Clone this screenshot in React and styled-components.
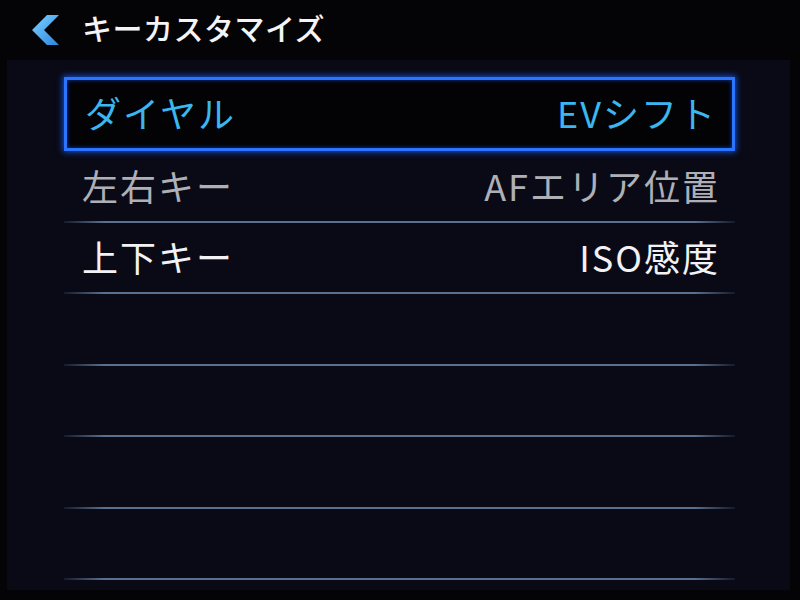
import React from 'react';
import styled, { createGlobalStyle } from 'styled-components';

const GlobalStyle = createGlobalStyle`
  html, body {
    margin: 0;
    padding: 0;
    background: #040407;
  }
  body {
    font-family: "Noto Sans CJK JP", "Noto Sans", "Liberation Sans", sans-serif;
  }
`;

const Screen = styled.div`
  width: 800px;
  height: 600px;
  display: flex;
  flex-direction: column;
  background: #040407;
  overflow: hidden;
`;

const Header = styled.div`
  height: 60px;
  display: flex;
  align-items: center;
  padding-left: 30px;
  gap: 20px;
  box-sizing: border-box;
`;

const Title = styled.h1`
  margin: 0;
  font-size: 30px;
  font-weight: 500;
  color: #f4f4f6;
  letter-spacing: 0.5px;
  line-height: 1;
  padding-bottom: 6px;
`;

const Panel = styled.div`
  flex: 1;
  margin: 0 10px 10px 7px;
  background: #0a0a16;
  padding: 17px 55px 0 57px;
  box-sizing: border-box;
`;

const List = styled.div`
  display: flex;
  flex-direction: column;
`;

const Row = styled.div`
  position: relative;
  height: ${p => (p.$selected ? '74px' : '71.5px')};
  box-sizing: border-box;
  display: flex;
  align-items: center;
  justify-content: space-between;
  padding: 0 15px 0 18px;
  font-size: 36px;
  font-weight: 400;
  letter-spacing: 2px;
  line-height: 1;
  color: ${p => (p.$selected ? '#3bb6ef' : p.$dim ? '#aeb0b6' : '#f2f2f4')};
  border: ${p => (p.$selected ? '3px solid #2a74ff' : 'none')};
  box-shadow: ${p => (p.$selected ? '0 0 6px 1px #1450d8, inset 0 0 4px #0b3aa8' : 'none')};
  background: ${p => (p.$selected ? '#030306' : 'transparent')};

  &::after {
    content: '';
    display: ${p => (p.$line ? 'block' : 'none')};
    position: absolute;
    left: 0;
    right: 0;
    bottom: 0;
    height: 2px;
    background: linear-gradient(
      90deg,
      rgba(70, 95, 130, 0.2) 0%,
      #5a7090 6%,
      #5a7090 94%,
      rgba(70, 95, 130, 0.2) 100%
    );
  }
`;

const Label = styled.span`
  padding-bottom: 4px;
`;

const Value = styled.span`
  padding-bottom: 4px;
`;

const BackIcon = () => (
  <svg width="32" height="32" viewBox="0 0 32 32">
    <defs>
      <linearGradient id="chev" x1="0" y1="0" x2="1" y2="1">
        <stop offset="0" stopColor="#7fd2ff" />
        <stop offset="1" stopColor="#2a86e0" />
      </linearGradient>
    </defs>
    <polygon points="17,1 29,1 14,16 29,31 17,31 2,16" fill="url(#chev)" />
  </svg>
);

const rows = [
  { label: 'ダイヤル', value: 'EVシフト', selected: true },
  { label: '左右キー', value: 'AFエリア位置', dim: true, line: true },
  { label: '上下キー', value: 'ISO感度', line: true },
  { line: true },
  { line: true },
  { line: true },
  { line: true },
];

export default function App() {
  return (
    <Screen>
      <GlobalStyle />
      <Header>
        <BackIcon />
        <Title>キーカスタマイズ</Title>
      </Header>
      <Panel>
        <List>
          {rows.map((r, i) => (
            <Row key={i} $selected={r.selected} $dim={r.dim} $line={r.line}>
              <Label>{r.label}</Label>
              <Value>{r.value}</Value>
            </Row>
          ))}
        </List>
      </Panel>
    </Screen>
  );
}
